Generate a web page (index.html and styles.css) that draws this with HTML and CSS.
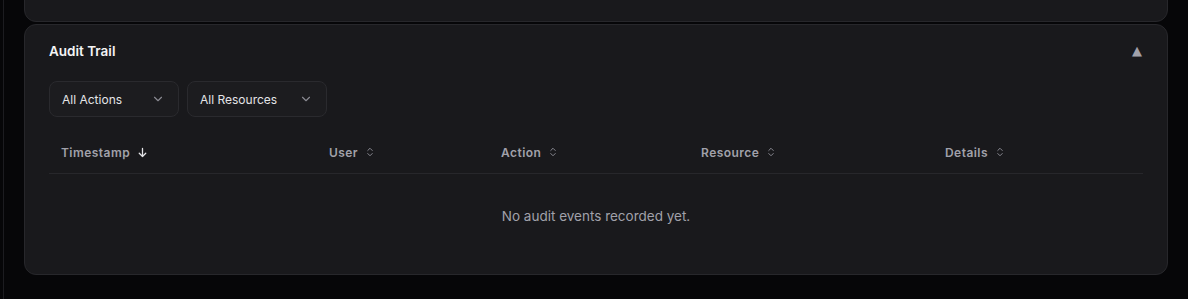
FILE: index.html
```html
<!DOCTYPE html>
<html>
<head>
<meta charset="utf-8">
<link rel="stylesheet" href="styles.css">
</head>
<body>
<div class="layout">
  <div class="rail"></div>
  <main class="main">
    <section class="card card-prev"></section>
    <section class="card audit">
      <header class="audit-head">
        <h2 class="audit-title">Audit Trail</h2>
        <span class="collapse">▲</span>
      </header>
      <div class="filters">
        <button class="select sel-actions"><span>All Actions</span>
          <svg class="chev" viewBox="0 0 16 16" width="14" height="14"><path d="M4 6l4 4 4-4" fill="none" stroke="currentColor" stroke-width="1.3" stroke-linecap="round" stroke-linejoin="round"/></svg>
        </button>
        <button class="select sel-resources"><span>All Resources</span>
          <svg class="chev" viewBox="0 0 16 16" width="14" height="14"><path d="M4 6l4 4 4-4" fill="none" stroke="currentColor" stroke-width="1.3" stroke-linecap="round" stroke-linejoin="round"/></svg>
        </button>
      </div>
      <table class="table">
        <colgroup>
          <col class="c1"><col class="c2"><col class="c3"><col class="c4"><col class="c5">
        </colgroup>
        <thead>
          <tr>
            <th><span class="th">Timestamp
              <svg class="sort active" viewBox="0 0 16 16" width="13" height="13"><path d="M8 3v10M4 9l4 4 4-4" fill="none" stroke="currentColor" stroke-width="1.6" stroke-linecap="round" stroke-linejoin="round"/></svg></span></th>
            <th><span class="th">User
              <svg class="sort" viewBox="0 0 16 16" width="12" height="12"><path d="M5 6l3-3 3 3M5 10l3 3 3-3" fill="none" stroke="currentColor" stroke-width="1.3" stroke-linecap="round" stroke-linejoin="round"/></svg></span></th>
            <th><span class="th">Action
              <svg class="sort" viewBox="0 0 16 16" width="12" height="12"><path d="M5 6l3-3 3 3M5 10l3 3 3-3" fill="none" stroke="currentColor" stroke-width="1.3" stroke-linecap="round" stroke-linejoin="round"/></svg></span></th>
            <th><span class="th">Resource
              <svg class="sort" viewBox="0 0 16 16" width="12" height="12"><path d="M5 6l3-3 3 3M5 10l3 3 3-3" fill="none" stroke="currentColor" stroke-width="1.3" stroke-linecap="round" stroke-linejoin="round"/></svg></span></th>
            <th><span class="th">Details
              <svg class="sort" viewBox="0 0 16 16" width="12" height="12"><path d="M5 6l3-3 3 3M5 10l3 3 3-3" fill="none" stroke="currentColor" stroke-width="1.3" stroke-linecap="round" stroke-linejoin="round"/></svg></span></th>
          </tr>
        </thead>
        <tbody>
          <tr><td class="empty" colspan="5">No audit events recorded yet.</td></tr>
        </tbody>
      </table>
    </section>
  </main>
</div>
</body>
</html>
```
FILE: styles.css
```css
* { box-sizing: border-box; }
html, body { margin: 0; padding: 0; }
body {
  background: #060608;
  font-family: Inter, "Noto Sans", sans-serif;
  color: #f4f4f5;
  width: 1188px;
  height: 299px;
  overflow: hidden;
}
.layout { display: flex; height: 299px; }
.rail { width: 4px; border-right: 1px solid #1c1c20; flex: none; }
.main {
  flex: 1;
  display: flex;
  flex-direction: column;
  gap: 2px;
  padding: 0 20px 0 20px;
}
.card {
  background: #19191c;
  border: 1px solid #27272b;
  border-radius: 12px;
}
.card-prev {
  height: 40px;
  margin-top: -18px;
  flex: none;
}
.audit {
  padding: 16px 24px 16px 24px;
}
.audit-head {
  display: flex;
  align-items: center;
  justify-content: space-between;
  height: 20px;
}
.audit-title {
  margin: 0;
  font-size: 13.5px;
  font-weight: 600;
  line-height: 20px;
  color: #f4f4f5;
}
.collapse {
  font-size: 13px;
  color: #a1a1aa;
  line-height: 20px;
  margin-right: 1px;
  font-family: "DejaVu Sans", sans-serif;
}
.filters {
  display: flex;
  gap: 8px;
  margin-top: 20px;
}
.select {
  display: flex;
  align-items: center;
  justify-content: space-between;
  height: 36px;
  padding: 0 13px 0 12px;
  background: #1c1c1f;
  border: 1px solid #2a2a2e;
  border-radius: 8px;
  color: #e4e4e7;
  font-family: Inter, "Noto Sans", sans-serif;
  font-size: 12px;
}
.sel-actions { width: 130px; }
.sel-resources { width: 140px; }
.chev { color: #8b8b93; }
.table {
  width: 100%;
  margin-top: 15px;
  border-collapse: collapse;
  table-layout: fixed;
}
.c1 { width: 268px; }
.c2 { width: 172px; }
.c3 { width: 200px; }
.c4 { width: 244px; }
.c5 { width: auto; }
thead tr { border-bottom: 1px solid #27272b; }
th {
  height: 41px;
  padding: 0 12px;
  text-align: left;
  font-size: 12px;
  font-weight: 600;
  letter-spacing: 0.45px;
  color: #a1a1aa;
}
.th { display: inline-flex; align-items: center; gap: 6px; }
.sort { color: #8b8b93; }
.sort.active { color: #e4e4e7; }
.empty {
  padding: 32px 0 32px;
  text-align: center;
  font-size: 13.5px;
  line-height: 20px;
  color: #a1a1aa;
}
```
